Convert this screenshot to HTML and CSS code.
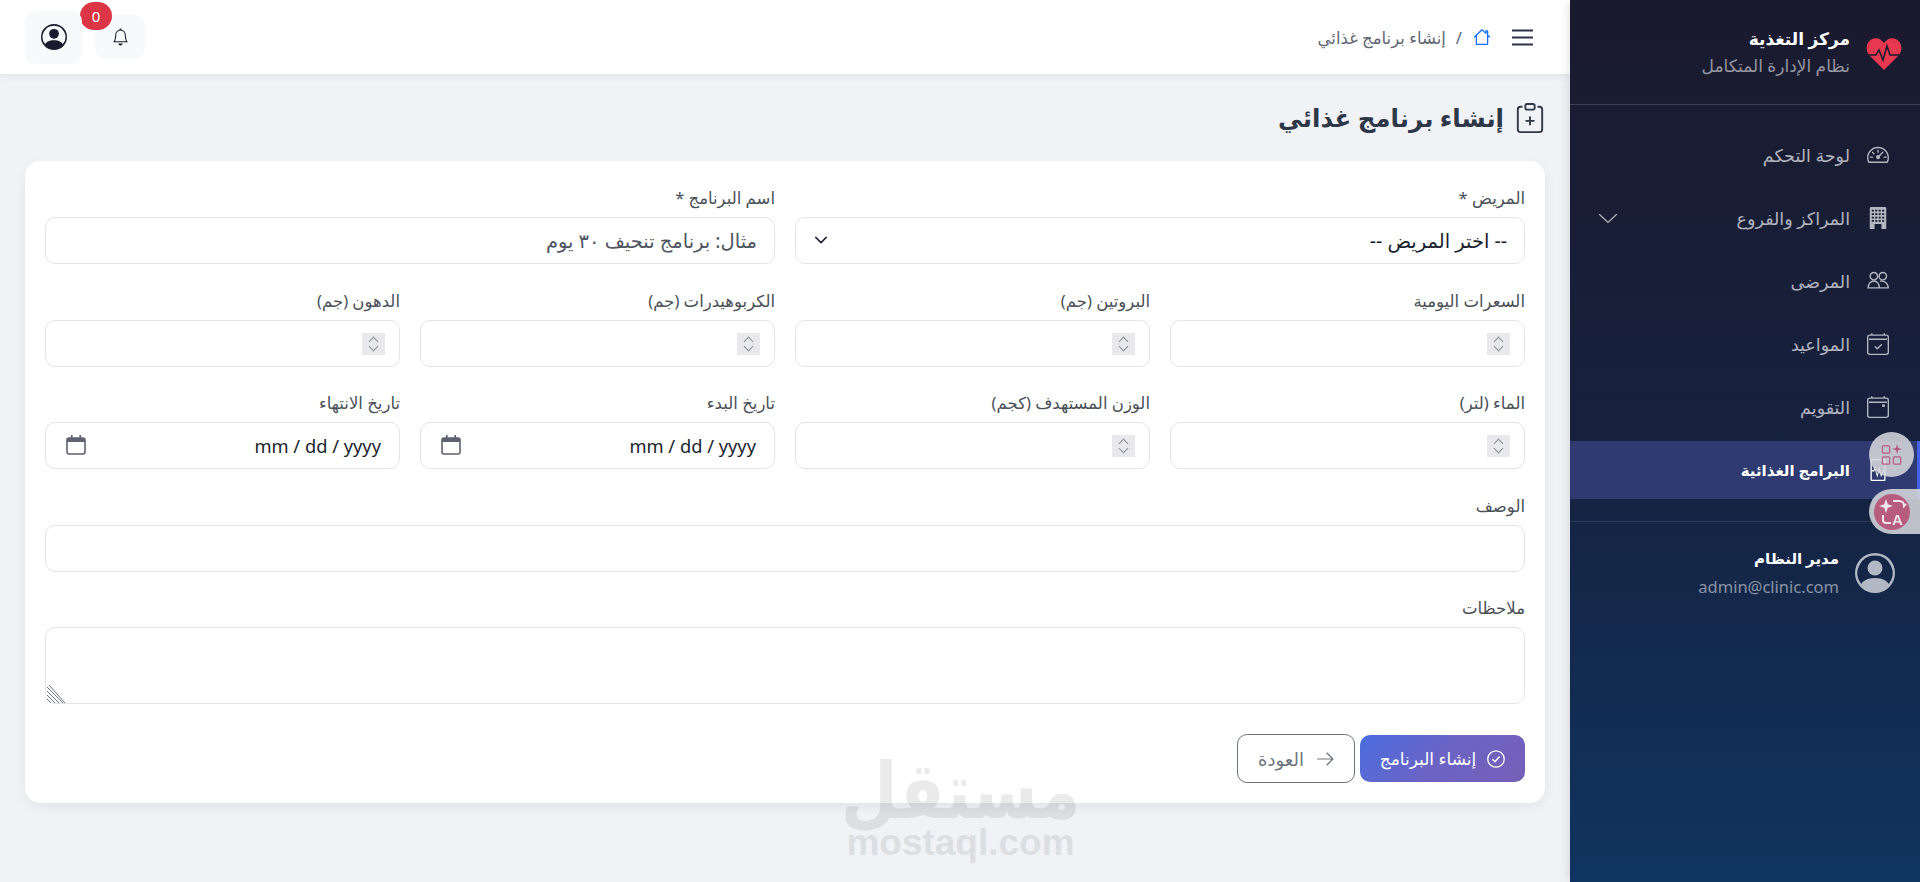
FILE: index.html
```html
<!DOCTYPE html>
<html lang="ar" dir="rtl">
<head>
  <meta charset="UTF-8">
  <title>إنشاء برنامج غذائي</title>
  <link rel="stylesheet" href="styles.css">
</head>
<body>
  <aside class="sidebar">
    <div class="brand">
      <svg class="brand-icon" viewBox="0 0 36 33"><path fill="#e63950" d="M18 33 3 18C-1 13 0 5 6 2c5-2 9 0 12 4 3-4 7-6 12-4 6 3 7 11 3 16z"/><path fill="none" stroke="#1a1a2e" stroke-width="1.6" d="M2 18h8l3-5 4 10 4-14 3 9h11"/></svg>
      <div>
        <div class="brand-name">مركز التغذية</div>
        <div class="brand-sub">نظام الإدارة المتكامل</div>
      </div>
    </div>
    <nav class="menu">
      <a class="menu-item">
        <svg viewBox="0 0 16 16"><path d="M8 4a.5.5 0 0 1 .5.5V6a.5.5 0 0 1-1 0V4.500A.5.5 0 0 1 8 4M3.700 5.700a.5.5 0 0 1 .7 0l1 1a.5.5 0 1 1-.7.700l-1-1a.5.500 0 0 1 0-.7M2 9.500a.5.500 0 0 1 .5-.5h1.500a.5.500 0 0 1 0 1H2.500a.5.500 0 0 1-.5-.5m10 0a.5.500 0 0 1 .5-.5H14a.5.500 0 0 1 0 1h-1.500a.5.500 0 0 1-.5-.5m-.2-3.800a.5.500 0 0 1 0 .7L9.400 8.900A1.500 1.500 0 1 1 8.700 8.200l2.400-2.500a.5.500 0 0 1 .7 0"/><path d="M0 10a8 8 0 1 1 15.300 3.200.9.900 0 0 1-.8.600H1.500a.9.900 0 0 1-.8-.6A8 8 0 0 1 0 10m8-7a7 7 0 0 0-6.400 9.800h12.800A7 7 0 0 0 8 3"/></svg>
        <span>لوحة التحكم</span>
      </a>
      <a class="menu-item">
        <svg viewBox="0 0 16 16"><path fill-rule="evenodd" d="M3 0h10a1 1 0 0 1 1 1v15H2V1a1 1 0 0 1 1-1M3.500 2v1.300h1.500V2zm2.500 0v1.300h1.500V2zm2.500 0v1.300H10V2zm2.500 0v1.300h1.500V2zM3.500 4.500v1.300h1.500V4.500zm2.500 0v1.300h1.500V4.500zm2.500 0v1.300H10V4.500zm2.500 0v1.300h1.500V4.500zM3.500 7v1.300h1.500V7zM6 7v1.300h1.500V7zm2.500 0v1.300H10V7zM11 7v1.300h1.500V7zM3.500 9.500v1.300h1.500V9.500zm2.500 0v1.300h1.500V9.500zm2.500 0v1.300H10V9.500zm2.500 0v1.300h1.500V9.500zM5.500 12.300V16h5v-3.700z"/></svg>
        <span>المراكز والفروع</span>
        <svg class="caret" viewBox="0 0 16 16"><path fill="none" stroke="currentColor" stroke-width="1" d="M1 5l7 6.500L15 5"/></svg>
      </a>
      <a class="menu-item">
        <svg viewBox="0 0 16 16"><g fill="none" stroke="currentColor" stroke-width="1.050"><circle cx="5" cy="4.500" r="2.700"/><circle cx="11.500" cy="4.500" r="2.700"/><path d="M.8 13c0-3 2-5 4.200-5s4 2 4 5zM9.500 8.200c2.800-.6 6 1.300 6 4.800h-6.500"/></g></svg>
        <span>المرضى</span>
      </a>
      <a class="menu-item">
        <svg viewBox="0 0 16 16"><path d="M10.850 8.150a.5.5 0 0 1 0 .7l-3 3a.5.500 0 0 1-.7 0l-1.500-1.500a.5.500 0 0 1 .7-.7l1.150 1.150 2.650-2.650a.5.500 0 0 1 .7 0"/><path d="M3.500 0a.5.5 0 0 1 .5.500V1h8V.500a.5.500 0 0 1 1 0V1h1a2 2 0 0 1 2 2v11a2 2 0 0 1-2 2H2a2 2 0 0 1-2-2V3a2 2 0 0 1 2-2h1V.500a.5.500 0 0 1 .5-.5M2 2a1 1 0 0 0-1 1v11a1 1 0 0 0 1 1h12a1 1 0 0 0 1-1V3a1 1 0 0 0-1-1zm-.5 2h13v1h-13z"/></svg>
        <span>المواعيد</span>
      </a>
      <a class="menu-item">
        <svg viewBox="0 0 16 16"><path d="M11 6.500a.5.5 0 0 1 .5-.5h1a.5.500 0 0 1 .5.500v1a.5.500 0 0 1-.5.500h-1a.5.500 0 0 1-.5-.5z"/><path d="M3.500 0a.5.5 0 0 1 .5.500V1h8V.500a.5.500 0 0 1 1 0V1h1a2 2 0 0 1 2 2v11a2 2 0 0 1-2 2H2a2 2 0 0 1-2-2V3a2 2 0 0 1 2-2h1V.500a.5.500 0 0 1 .5-.5M2 2a1 1 0 0 0-1 1v11a1 1 0 0 0 1 1h12a1 1 0 0 0 1-1V3a1 1 0 0 0-1-1zm-.5 2h13v1h-13z"/></svg>
        <span>التقويم</span>
      </a>
      <a class="menu-item active">
        <svg viewBox="0 0 16 16"><path fill-rule="evenodd" d="M3.500 0h9a1 1 0 0 1 1 1v14a1 1 0 0 1-1 1h-9a1 1 0 0 1-1-1V1a1 1 0 0 1 1-1m0 1v14h9V1z"/><path d="M3.500 8h1.200l1.200-3 1.600 6 1.500-6 1.300 6 1.200-3h1v1h-.4l-1.900 4.200-1.200-5-1.500 5.500L5.800 7.500 5.300 9H3.500z"/></svg>
        <span>البرامج الغذائية</span>
      </a>
    </nav>
    <div class="user">
      <svg class="user-icon" viewBox="0 0 16 16"><path d="M11 6a3 3 0 1 1-6 0 3 3 0 0 1 6 0"/><path fill-rule="evenodd" d="M0 8a8 8 0 1 1 16 0A8 8 0 0 1 0 8m8-7a7 7 0 0 0-5.470 11.370C3.240 11.220 4.850 10 8 10s4.760 1.220 5.470 2.370A7 7 0 0 0 8 1"/></svg>
      <div>
        <div class="user-name">مدير النظام</div>
        <div class="user-mail">admin@clinic.com</div>
      </div>
    </div>
  </aside>

  <div class="main">
    <header class="topbar">
      <div class="crumbs">
        <svg class="burger" viewBox="0 0 21 17"><path d="M0 1.500h21M0 8.500h21M0 15.500h21" stroke="#2c3347" stroke-width="2"/></svg>
        <svg class="home" viewBox="0 0 16 16"><path fill="none" stroke="#0d6efd" stroke-width="1.100" stroke-linejoin="round" d="M1 8.200 8 1.500l3.500 3.300V2.500h1.500v3.800l2 1.900M3 6.500V14.500h10V6.500"/></svg>
        <span class="sep">/</span>
        <span class="crumb-text">إنشاء برنامج غذائي</span>
      </div>
      <div class="top-actions">
        <button class="icon-btn bell">
          <svg viewBox="0 0 16 16"><path d="M8 16a2 2 0 0 0 2-2H6a2 2 0 0 0 2 2M8 1.900l-.8.160A4 4 0 0 0 4 6c0 .630-.13 2.200-.46 3.740-.16.770-.38 1.570-.66 2.260h10.240c-.280-.690-.5-1.490-.66-2.260C12.130 8.200 12 6.630 12 6a4 4 0 0 0-3.200-3.920zM14.220 12c.220.440.480.790.780 1H1c.300-.210.560-.560.780-1C2.680 10.200 3 6.880 3 6c0-2.420 1.720-4.440 4-4.900a1 1 0 1 1 2 0c2.280.460 4 2.480 4 4.900 0 .880.320 4.200 1.220 6"/></svg>
          <span class="badge">0</span>
        </button>
        <button class="icon-btn avatar">
          <svg viewBox="0 0 16 16"><path d="M11 6a3 3 0 1 1-6 0 3 3 0 0 1 6 0"/><path fill-rule="evenodd" d="M0 8a8 8 0 1 1 16 0A8 8 0 0 1 0 8m8-7a7 7 0 0 0-5.470 11.370C3.240 11.220 4.850 10 8 10s4.760 1.220 5.470 2.370A7 7 0 0 0 8 1"/></svg>
        </button>
      </div>
    </header>

    <main class="content">
      <h1 class="page-title">
        <svg viewBox="0 0 16 16"><path d="M8 7a.5.5 0 0 1 .5.500V9H10a.5.500 0 0 1 0 1H8.500v1.500a.5.500 0 0 1-1 0V10H6a.5.500 0 0 1 0-1h1.500V7.500A.5.500 0 0 1 8 7"/><path d="M4 1.500H3a2 2 0 0 0-2 2V14a2 2 0 0 0 2 2h10a2 2 0 0 0 2-2V3.500a2 2 0 0 0-2-2h-1v1h1a1 1 0 0 1 1 1V14a1 1 0 0 1-1 1H3a1 1 0 0 1-1-1V3.500a1 1 0 0 1 1-1h1z"/><path d="M9.500 1a.5.500 0 0 1 .5.500v1a.5.500 0 0 1-.5.500h-3a.5.500 0 0 1-.5-.5v-1a.5.500 0 0 1 .5-.5zm-3-1A1.500 1.500 0 0 0 5 1.500v1A1.500 1.500 0 0 0 6.500 4h3A1.500 1.500 0 0 0 11 2.500v-1A1.500 1.500 0 0 0 9.500 0z"/></svg>
        إنشاء برنامج غذائي
      </h1>

      <form class="card">
        <div class="row two">
          <div class="field">
            <label>المريض *</label>
            <div class="control">
              <select><option>-- اختر المريض --</option></select>
              <svg class="chevron" viewBox="0 0 16 16"><path fill="none" stroke="#1a2238" stroke-width="1.700" stroke-linecap="round" stroke-linejoin="round" d="M2 5l6 6 6-6"/></svg>
            </div>
          </div>
          <div class="field">
            <label>اسم البرنامج *</label>
            <div class="control"><input type="text" placeholder="مثال: برنامج تنحيف ٣٠ يوم"></div>
          </div>
        </div>

        <div class="row four">
          <div class="field">
            <label>السعرات اليومية</label>
            <div class="control"><input type="text"><span class="spin"><i></i><i class="down"></i></span></div>
          </div>
          <div class="field">
            <label>البروتين (جم)</label>
            <div class="control"><input type="text"><span class="spin"><i></i><i class="down"></i></span></div>
          </div>
          <div class="field">
            <label>الكربوهيدرات (جم)</label>
            <div class="control"><input type="text"><span class="spin"><i></i><i class="down"></i></span></div>
          </div>
          <div class="field">
            <label>الدهون (جم)</label>
            <div class="control"><input type="text"><span class="spin"><i></i><i class="down"></i></span></div>
          </div>
        </div>

        <div class="row four">
          <div class="field">
            <label>الماء (لتر)</label>
            <div class="control"><input type="text"><span class="spin"><i></i><i class="down"></i></span></div>
          </div>
          <div class="field">
            <label>الوزن المستهدف (كجم)</label>
            <div class="control"><input type="text"><span class="spin"><i></i><i class="down"></i></span></div>
          </div>
          <div class="field">
            <label>تاريخ البدء</label>
            <div class="control">
              <input class="date" type="text" value="mm / dd / yyyy">
              <svg class="cal" viewBox="0 0 20 20"><rect x="1" y="3" width="18" height="16" rx="2" fill="none" stroke="#5c6270" stroke-width="1.600"/><path d="M1 3h18v4H1zM5 0h1.600v4H5zM13.400 0H15v4h-1.600z" fill="#5c6270"/></svg>
            </div>
          </div>
          <div class="field">
            <label>تاريخ الانتهاء</label>
            <div class="control">
              <input class="date" type="text" value="mm / dd / yyyy">
              <svg class="cal" viewBox="0 0 20 20"><rect x="1" y="3" width="18" height="16" rx="2" fill="none" stroke="#5c6270" stroke-width="1.600"/><path d="M1 3h18v4H1zM5 0h1.600v4H5zM13.400 0H15v4h-1.600z" fill="#5c6270"/></svg>
            </div>
          </div>
        </div>

        <div class="field wide">
          <label>الوصف</label>
          <div class="control"><input type="text"></div>
        </div>

        <div class="field notes">
          <label>ملاحظات</label>
          <div class="control">
            <textarea></textarea>
            <svg class="grip" viewBox="0 0 18 18"><path d="M0 2l16 16M0 6l12 12M0 10l8 8M0 14l4 4M2 0l16 18" stroke="#6b7280" stroke-width="1"/></svg>
          </div>
        </div>

        <div class="actions">
          <button type="button" class="btn primary">
            <svg viewBox="0 0 16 16"><circle cx="8" cy="8" r="7.300" fill="none" stroke="#fff" stroke-width="1.100"/><path d="M4.800 8.200l2.200 2.200 4.200-4.600" fill="none" stroke="#fff" stroke-width="1.300"/></svg>
            إنشاء البرنامج
          </button>
          <button type="button" class="btn outline">
            <svg viewBox="0 0 16 16"><path d="M1 8h14M9.500 2.500 15 8l-5.500 5.500" fill="none" stroke="currentColor" stroke-width="1.100"/></svg>
            العودة
          </button>
        </div>
      </form>
    </main>

    <div class="watermark">
      <div class="wm-ar"><span>مستقل</span></div>
      <div class="wm-en">mostaql.com</div>
    </div>
  </div>

  <div class="float-tool apps">
    <svg viewBox="0 0 24 24"><g fill="none" stroke="#b85c7e" stroke-width="1.300"><rect x="1.500" y="2" width="8" height="8" rx="1"/><rect x="1.500" y="14" width="8" height="8" rx="1"/><rect x="13.500" y="14" width="8" height="8" rx="1"/></g><path d="M17.500 0l1.200 4.300 4.300 1.200-4.300 1.200-1.200 4.300-1.200-4.300-4.300-1.200 4.300-1.200z" fill="#b85c7e"/></svg>
  </div>
  <div class="float-tool translate">
    <span class="translate-dot">
      <svg viewBox="0 0 36 36"><path d="M12 5l1.800 5.200L19 12l-5.200 1.800L12 19l-1.800-5.200L5 12l5.200-1.800z" fill="#efe6ea"/><path d="M19 7h6c3 0 5 2 5 5l2-2M9 21v5c0 2 1 3 3 3h5" fill="none" stroke="#efe6ea" stroke-width="2"/><text x="18" y="31" class="translate-txt">A</text></svg>
    </span>
  </div>
</body>
</html>
```

FILE: styles.css
```css
* {
  box-sizing: border-box;
}

html,
body {
  height: 100%;
}

body {
  margin: 0;
  display: flex;
  overflow: hidden;
  background: #f0f2f6;
  color: #2d3748;
  font-family: "Noto Sans", "DejaVu Sans", sans-serif;
}

/* sidebar */
.sidebar {
  position: relative;
  z-index: 2;
  width: 350px;
  flex-shrink: 0;
  height: 882px;
  background: linear-gradient(180deg, #1a1a2e 0%, #16213e 50%, #0f3460 100%);
  color: #fff;
  box-shadow: -2px 0 10px rgba(0, 0, 0, 0.1);
}

.brand {
  height: 105px;
  padding: 0 18px 0 20px;
  display: flex;
  align-items: center;
  gap: 16px;
  border-bottom: 1px solid rgba(255, 255, 255, 0.16);
}

.brand-icon {
  width: 36px;
  height: 33px;
  margin-top: 2px;
}

.brand-name {
  font-size: 17px;
  font-weight: 600;
  line-height: 28px;
}

.brand-sub {
  font-size: 17px;
  line-height: 26px;
  color: rgba(255, 255, 255, 0.55);
}

.menu {
  padding: 21px 0 0;
}

.menu-item {
  height: 58px;
  margin-bottom: 5px;
  padding: 0 31px 0 26px;
  display: flex;
  align-items: center;
  gap: 17px;
  font-size: 17.5px;
  color: rgba(255, 255, 255, 0.68);
}

.menu-item svg {
  width: 22px;
  height: 22px;
  fill: currentColor;
  flex-shrink: 0;
}

.menu-item .caret {
  width: 20px;
  height: 20px;
  margin-right: auto;
  margin-left: 2px;
}

.menu-item.active {
  background: #2e3a70;
  border-right: 3px solid #4361ee;
  padding-right: 28px;
  color: #fff;
  font-size: 15px;
  font-weight: 600;
}

.user {
  margin-top: 22px;
  padding: 22px 25px 0;
  display: flex;
  align-items: center;
  gap: 16px;
  border-top: 1px solid rgba(255, 255, 255, 0.1);
}

.user-icon {
  width: 40px;
  height: 40px;
  fill: rgba(255, 255, 255, 0.68);
}

.user-name {
  font-size: 15px;
  font-weight: 600;
  line-height: 28px;
}

.user-mail {
  font-size: 16.5px;
  line-height: 30px;
  color: rgba(255, 255, 255, 0.5);
}

/* main column */
.main {
  flex: 1;
  min-width: 0;
  position: relative;
}

.topbar {
  height: 74px;
  padding: 0 37px 0 25px;
  background: #fff;
  box-shadow: 0 2px 8px rgba(0, 0, 0, 0.06);
  display: flex;
  align-items: center;
  justify-content: space-between;
}

.crumbs {
  display: flex;
  align-items: center;
  font-size: 16.5px;
  color: #5f6672;
}

.burger {
  width: 21px;
  height: 17px;
  margin-left: 21px;
}

.home {
  width: 18px;
  height: 18px;
  margin-left: 11px;
}

.sep {
  margin-left: 10px;
}

.top-actions {
  display: flex;
  align-items: center;
  gap: 13px;
}

.icon-btn {
  position: relative;
  padding: 0;
  border: none;
  background: #f8f9fa;
  border-radius: 10px;
  font-family: inherit;
  display: flex;
  align-items: center;
  justify-content: center;
}

.icon-btn svg {
  fill: #1a1a2e;
}

.bell {
  width: 50px;
  height: 44px;
}

.bell svg {
  width: 17px;
  height: 18px;
}

.avatar {
  width: 57px;
  height: 53px;
}

.avatar svg {
  width: 26px;
  height: 26px;
}

.badge {
  position: absolute;
  top: -13px;
  left: -15px;
  width: 32px;
  height: 28px;
  border-radius: 14px;
  background: #dc3545;
  color: #fff;
  font-size: 15px;
  line-height: 28px;
  text-align: center;
}

.content {
  padding: 19px 25px 0;
}

.page-title {
  margin: 0 0 19px;
  height: 49px;
  display: flex;
  align-items: center;
  gap: 11px;
  font-size: 24.5px;
  font-weight: 700;
  color: #2d3748;
}

.page-title svg {
  width: 30px;
  height: 30px;
  fill: currentColor;
}

.card {
  height: 642px;
  padding: 26px 20px 0;
  background: #fff;
  border-radius: 15px;
  box-shadow: 0 4px 12px rgba(0, 0, 0, 0.06);
}

.row {
  display: grid;
  gap: 20px;
}

.row.two {
  grid-template-columns: 1fr 1fr;
}

.row.four {
  grid-template-columns: repeat(4, 1fr);
}

.field {
  margin-bottom: 25.5px;
}

.field label {
  display: block;
  height: 22px;
  margin-bottom: 8px;
  font-size: 16.5px;
  line-height: 22px;
  color: #4a5058;
}

.control {
  position: relative;
}

.control input,
.control select,
.control textarea {
  display: block;
  width: 100%;
  height: 47px;
  padding: 0 17px;
  border: 1.5px solid #e2e4e8;
  border-radius: 10px;
  background: #fff;
  font-family: inherit;
  font-size: 19.5px;
  color: #1a1f2e;
  outline: none;
  appearance: none;
}

.control input::placeholder {
  color: #4f5562;
  opacity: 1;
}

.control textarea {
  height: 77px;
  resize: none;
}

.notes {
  margin-bottom: 30px;
}

.chevron {
  position: absolute;
  left: 19px;
  top: 16px;
  width: 14px;
  height: 14px;
}

.spin {
  position: absolute;
  right: 15px;
  top: 13px;
  width: 23px;
  height: 22px;
  background: #e9e9ed;
}

.spin i {
  position: absolute;
  left: 8px;
  top: 5px;
  width: 7px;
  height: 7px;
  border-top: 1.5px solid #8b8f98;
  border-left: 1.5px solid #8b8f98;
  transform: rotate(45deg);
}

.spin i.down {
  top: 10px;
  transform: rotate(225deg);
}

.control .date {
  padding-right: 18px;
  font-size: 18.3px;
  text-align: right;
}

.cal {
  position: absolute;
  left: 21px;
  top: 13px;
  width: 20px;
  height: 20px;
}

.grip {
  position: absolute;
  left: 2px;
  bottom: 1px;
  width: 18px;
  height: 18px;
}

.actions {
  display: flex;
  align-items: center;
  gap: 5px;
}

.btn {
  padding: 0;
  border-radius: 10px;
  display: flex;
  align-items: center;
  justify-content: center;
  font-family: inherit;
}

.btn svg {
  width: 18px;
  height: 18px;
}

.primary {
  width: 165px;
  height: 47px;
  gap: 11px;
  border: none;
  font-size: 17px;
  background: linear-gradient(135deg, #4a6ee0 0%, #6c63c4 50%, #7660b8 100%);
  color: #fff;
}

.outline {
  width: 118px;
  height: 49px;
  gap: 12px;
  border: 1px solid #6c757d;
  font-size: 18px;
  background: #fff;
  color: #6c757d;
}

.watermark {
  position: absolute;
  left: 846px;
  top: 752px;
  width: 229px;
  color: #000;
  opacity: 0.08;
  pointer-events: none;
}

.wm-ar {
  height: 72px;
  display: flex;
  justify-content: center;
  font-size: 78px;
  font-weight: 800;
  line-height: 72px;
  white-space: nowrap;
  transform: scaleX(0.84);
}

.wm-en {
  text-align: center;
  font-family: "Liberation Sans", sans-serif;
  font-size: 37px;
  font-weight: 700;
  line-height: 38px;
}

/* floating browser widgets */
.float-tool {
  position: fixed;
  display: flex;
  align-items: center;
  justify-content: center;
  z-index: 3;
  background: rgba(214, 214, 220, 0.88);
}

.apps {
  left: 1869px;
  top: 432px;
  width: 45px;
  height: 45px;
  border-radius: 50%;
}

.apps svg {
  width: 22px;
  height: 22px;
}

.translate {
  left: 1869px;
  top: 489px;
  width: 51px;
  height: 45px;
  border-radius: 23px 0 0 23px;
  justify-content: flex-start;
  padding-right: 10px;
  padding-left: 5px;
}

.translate-dot {
  width: 36px;
  height: 36px;
  border-radius: 50%;
  background: #b85c7e;
  flex-shrink: 0;
}

.translate-dot svg {
  display: block;
  width: 36px;
  height: 36px;
}

.translate-txt {
  font-family: "Liberation Sans", sans-serif;
  font-size: 15px;
  font-weight: 700;
  fill: #efe6ea;
  direction: ltr;
}
```
